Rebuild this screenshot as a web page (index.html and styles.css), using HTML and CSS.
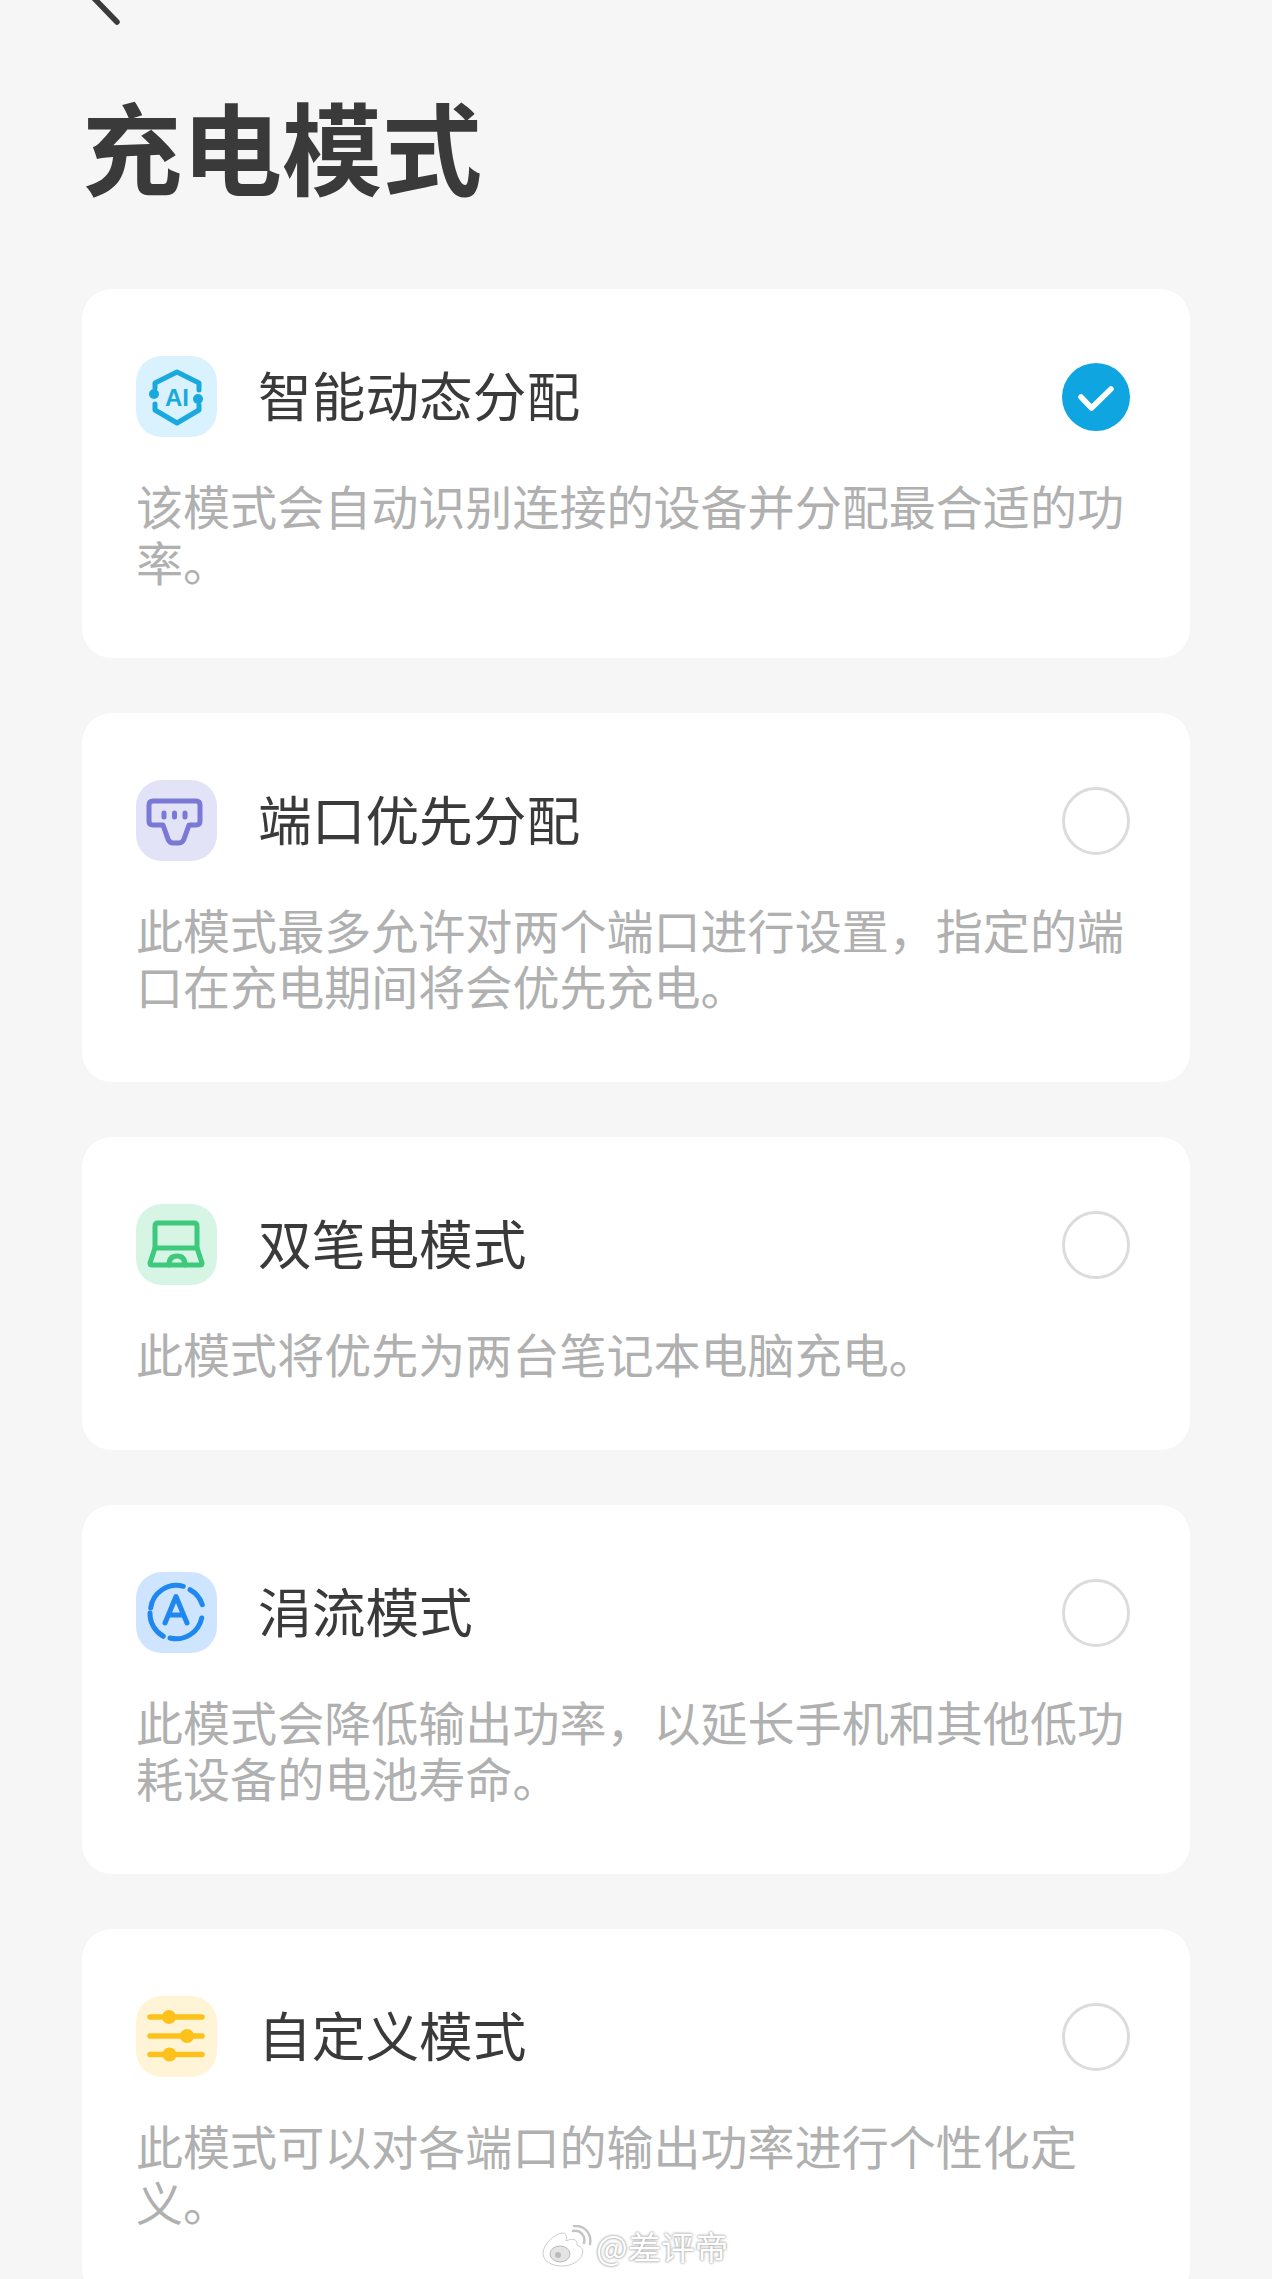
FILE: index.html
```html
<!DOCTYPE html>
<html lang="zh-CN">
<head>
    <meta charset="UTF-8">
    <title>充电模式</title>
    <link rel="stylesheet" href="styles.css">
</head>
<body>
    <div class="page">
        <svg class="back" width="40" height="26" viewBox="0 0 40 26">
            <path d="M0 -8L29 22" fill="none" stroke="#3b3b3b" stroke-width="5.5" stroke-linecap="round"/>
        </svg>
        <h1>充电模式</h1>

        <div class="card">
            <div class="card-head">
                <span class="icon icon-ai">
                    <svg width="81" height="81" viewBox="0 0 81 81">
                        <g fill="none" stroke="#1aa9df" stroke-width="5" stroke-linecap="round" stroke-linejoin="round">
                            <path d="M19 32V27L41 16L63 27V34"/>
                            <path d="M19 48V54L41 67L63 54V49"/>
                        </g>
                        <circle cx="18" cy="38" r="5" fill="#1aa9df"/>
                        <circle cx="62" cy="43" r="5" fill="#1aa9df"/>
                        <text x="41" y="50" class="ai-text">AI</text>
                    </svg>
                </span>
                <span class="card-title">智能动态分配</span>
                <span class="radio radio-on">
                    <svg width="68" height="68" viewBox="0 0 68 68">
                        <path d="M19 34L29.5 45L49 26" fill="none" stroke="#fff" stroke-width="5.5" stroke-linecap="round" stroke-linejoin="round"/>
                    </svg>
                </span>
            </div>
            <p class="desc">该模式会自动识别连接的设备并分配最合适的功率。</p>
        </div>

        <div class="card">
            <div class="card-head">
                <span class="icon icon-port">
                    <svg width="81" height="81" viewBox="0 0 81 81">
                        <path d="M17 21H60Q64 21 64 25V41Q64 45 60 45H53L48 59Q46.500 63 43 63H37Q33.500 63 32 59L27 45H17Q13 45 13 41V25Q13 21 17 21Z" fill="none" stroke="#7b79d6" stroke-width="5" stroke-linejoin="round"/>
                        <path d="M28 33V37M38.500 33V37M49 33V37" fill="none" stroke="#7b79d6" stroke-width="5" stroke-linecap="round"/>
                    </svg>
                </span>
                <span class="card-title">端口优先分配</span>
                <span class="radio"></span>
            </div>
            <p class="desc">此模式最多允许对两个端口进行设置，指定的端口在充电期间将会优先充电。</p>
        </div>

        <div class="card">
            <div class="card-head">
                <span class="icon icon-laptop">
                    <svg width="81" height="81" viewBox="0 0 81 81">
                        <g fill="none" stroke="#3ec97c" stroke-width="5" stroke-linejoin="round" stroke-linecap="round">
                            <path d="M19 44V22Q19 19 22 19H58Q61 19 61 22V44"/>
                            <path d="M19 44H61L66 59Q66 61 64 61H16Q14 61 14 59Z"/>
                            <path d="M33 61Q33 52 41 52Q49 52 49 61"/>
                        </g>
                    </svg>
                </span>
                <span class="card-title">双笔电模式</span>
                <span class="radio"></span>
            </div>
            <p class="desc">此模式将优先为两台笔记本电脑充电。</p>
        </div>

        <div class="card">
            <div class="card-head">
                <span class="icon icon-trickle">
                    <svg width="81" height="81" viewBox="0 0 81 81">
                        <g fill="none" stroke="#1f87f0" stroke-width="5" stroke-linecap="round" stroke-linejoin="round">
                            <path d="M14.700 36A26 26 0 0 1 47.300 14.300"/>
                            <path d="M54 17.700A26 26 0 0 1 66.300 32.700"/>
                            <path d="M65.700 46A26 26 0 0 1 34 66"/>
                            <path d="M27.300 64.300A26 26 0 0 1 14 41"/>
                            <path d="M29 51L40 24.500L51 51M33 43H47"/>
                        </g>
                    </svg>
                </span>
                <span class="card-title">涓流模式</span>
                <span class="radio"></span>
            </div>
            <p class="desc">此模式会降低输出功率，以延长手机和其他低功耗设备的电池寿命。</p>
        </div>

        <div class="card">
            <div class="card-head">
                <span class="icon icon-custom">
                    <svg width="81" height="81" viewBox="0 0 81 81">
                        <path d="M14 21H66M14 40H66M14 58.500H66" fill="none" stroke="#fcc21b" stroke-width="5.500" stroke-linecap="round"/>
                        <circle cx="33" cy="21" r="7" fill="#fcc21b"/>
                        <circle cx="51" cy="40" r="7" fill="#fcc21b"/>
                        <circle cx="33.500" cy="58.500" r="7" fill="#fcc21b"/>
                    </svg>
                </span>
                <span class="card-title">自定义模式</span>
                <span class="radio"></span>
            </div>
            <p class="desc">此模式可以对各端口的输出功率进行个性化定义。</p>
        </div>
    </div>

    <div class="watermark">
        <svg width="50" height="42" viewBox="0 0 50 42">
            <path d="M20 41C9 41 1 36 1 28C1 20 12 9 20 8C25 8 25 12 24 16C30 13 36 14 35 20C40 22 42 25 40 30C37 37 29 41 20 41Z" fill="#fff" stroke="#ccc" stroke-width="1"/>
            <ellipse cx="18" cy="29" rx="10" ry="8" fill="#e4e4e4" stroke="#bbb"/>
            <circle cx="16" cy="30" r="3" fill="#bbb"/>
            <path d="M31 6C38 5 44 10 42 18M32 1C42 0 50 8 48 19" fill="none" stroke="#c4c4c4" stroke-width="2.500" stroke-linecap="round"/>
        </svg>
        <span>@差评帝</span>
    </div>
</body>
</html>
```

FILE: styles.css
```css
html, body {
    margin: 0;
    padding: 0;
    height: 2279px;
    overflow: hidden;
}

body {
    position: relative;
    font-family: "Noto Sans CJK SC", "Noto Sans", sans-serif;
    background-color: #f6f6f6;
    color: #3a3a3a;
}

.page {
    padding: 0 82px;
}

.back {
    display: block;
    margin-left: 6px;
}

h1 {
    margin: 59px 0 0;
    font-size: 100px;
    line-height: 120px;
    font-weight: 700;
}

.card {
    margin-bottom: 55px;
    padding: 67px 60px 69px 54px;
    background: #fff;
    border-radius: 30px;
}

h1 + .card {
    margin-top: 84px;
}

.card-head {
    display: flex;
    align-items: center;
    height: 81px;
}

.icon {
    width: 81px;
    height: 81px;
    flex: none;
    border-radius: 26px;
}

.icon svg {
    display: block;
}

.icon-ai { background: #d9f2fd; }
.icon-port { background: #e3e3f8; }
.icon-laptop { background: #d6f5e5; }
.icon-trickle { background: #cfe5ff; }
.icon-custom { background: #fff4d6; }

.ai-text {
    font-family: "Liberation Sans", sans-serif;
    font-size: 24px;
    font-weight: 700;
    fill: #1aa9df;
    text-anchor: middle;
}

.card-title {
    flex: 1;
    margin-left: 41px;
    padding-bottom: 5px;
    font-size: 53.700px;
    line-height: 60px;
}

.radio {
    width: 68px;
    height: 68px;
    flex: none;
    box-sizing: border-box;
    border: 3px solid #dcdcdc;
    border-radius: 50%;
}

.radio-on {
    border: none;
    background: #0ea5e0;
}

.radio-on svg {
    display: block;
}

.desc {
    margin: 40px 0 0;
    font-size: 47.050px;
    line-height: 56px;
    color: #b0b0b0;
}

.watermark {
    position: absolute;
    left: 542px;
    top: 2225px;
    display: flex;
    align-items: center;
    gap: 4px;
}

.watermark span {
    font-size: 33.500px;
    line-height: 26px;
    color: #fff;
    text-shadow: 0 0 2px #999, 0 0 3px #aaa;
}
```
